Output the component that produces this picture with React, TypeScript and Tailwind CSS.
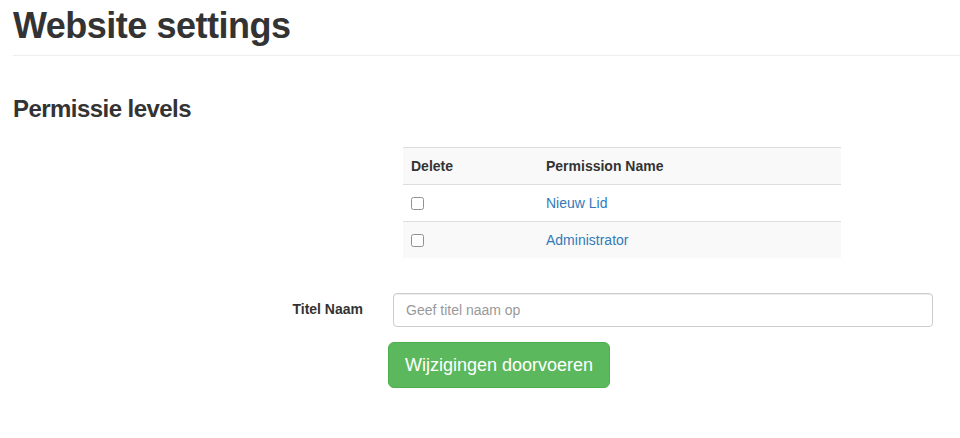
import React from 'react';

const permissions = ['Nieuw Lid', 'Administrator'];

export default function App() {
    return (
        <main
            className="min-h-screen bg-white pl-[13px] text-[14px] text-[#333]"
            style={{ fontFamily: '"Liberation Sans", Arial, sans-serif' }}
        >
            {/* Header */}
            <div className="pt-[6px] pb-[9px] border-b border-[#eee]">
                <h1 className="text-[36px] leading-[1.1] font-bold tracking-[-0.5px]">Website settings</h1>
            </div>

            <h3 className="mt-[40px] text-[24px] leading-[1.1] font-bold tracking-[-0.55px]">Permissie levels</h3>

            {/* Tabel */}
            <table className="mt-[25px] ml-[390px] w-[438px] border-collapse">
                <thead>
                    <tr className="bg-[#f9f9f9] border-t border-b border-[#ddd]">
                        <th className="w-[135px] p-2 text-left font-bold leading-[20px]">Delete</th>
                        <th className="p-2 text-left font-bold leading-[20px]">Permission Name</th>
                    </tr>
                </thead>
                <tbody>
                    {permissions.map((name, i) => (
                        <tr
                            key={name}
                            className={`border-b border-[#ddd] last:border-b-0 ${i % 2 === 1 ? 'bg-[#f9f9f9]' : 'bg-white'}`}
                        >
                            <td className="p-2 leading-[20px]">
                                <input type="checkbox" className="block w-[13px] h-[13px] mt-[1px] opacity-80" />
                            </td>
                            <td className="p-2 leading-[20px]">
                                <a href="#" className="text-[#337ab7]">
                                    {name}
                                </a>
                            </td>
                        </tr>
                    ))}
                </tbody>
            </table>

            {/* Formulier */}
            <div className="mt-[35px] flex items-center">
                <label className="w-[350px] text-right font-bold">Titel Naam</label>
                <input
                    type="text"
                    placeholder="Geef titel naam op"
                    className="ml-[30px] w-[540px] h-[34px] px-3 border border-[#ccc] rounded-[4px] text-[14px] text-[#555] placeholder:text-[#999] shadow-[inset_0_1px_1px_rgba(0,0,0,0.075)] outline-none"
                />
            </div>
            <div className="mt-[15px] pl-[375px]">
                <button className="px-4 py-[10px] text-[18px] leading-[24px] text-white bg-[#5cb85c] border border-[#4cae4c] rounded-[6px]">
                    Wijzigingen doorvoeren
                </button>
            </div>
        </main>
    );
}
